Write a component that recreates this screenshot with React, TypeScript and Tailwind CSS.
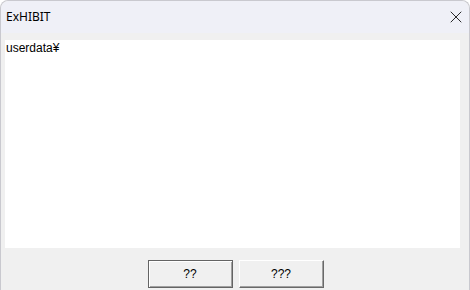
import { X } from "lucide-react";

export default function App() {
  return (
    <div className="w-[470px] h-[290px] overflow-hidden bg-white">
      <div className="flex flex-col h-full rounded-t-[8px] border-t border-l border-r border-[#c9c9cf] bg-[#f0f0f0]">
        <div className="flex items-center justify-between h-[32px] bg-[#eff0f7] rounded-t-[8px] pl-[5px] pr-[3px]">
          <span className="text-[12px] text-black" style={{ fontFamily: '"Noto Sans", sans-serif' }}>
            ExHIBIT
          </span>
          <X size={20} strokeWidth={1} className="text-black" />
        </div>
        <div className="flex flex-col flex-1 px-[4px] pt-[7px]">
          <div
            className="h-[208px] w-[455px] bg-white pl-[1px] pt-[1px] text-[12px] leading-[14px] text-black"
            style={{ fontFamily: '"Liberation Sans", sans-serif' }}
          >
            userdata¥
          </div>
          <div className="flex justify-center gap-[6px] pt-[12px] pl-[1px]">
            <button
              className="w-[85px] h-[28px] bg-[#f0f0f0] border border-[#646464] shadow-[inset_1px_1px_0_#ffffff,inset_-1px_-1px_0_#a0a0a0] text-[12px] text-black"
              style={{ fontFamily: '"Liberation Sans", sans-serif' }}
            >
              ??
            </button>
            <button
              className="w-[85px] h-[28px] bg-[#f0f0f0] border border-t-[#ffffff] border-l-[#ffffff] border-b-[#696969] border-r-[#696969] shadow-[inset_-1px_-1px_0_#a0a0a0] text-[12px] text-black"
              style={{ fontFamily: '"Liberation Sans", sans-serif' }}
            >
              ???
            </button>
          </div>
        </div>
      </div>
    </div>
  );
}
